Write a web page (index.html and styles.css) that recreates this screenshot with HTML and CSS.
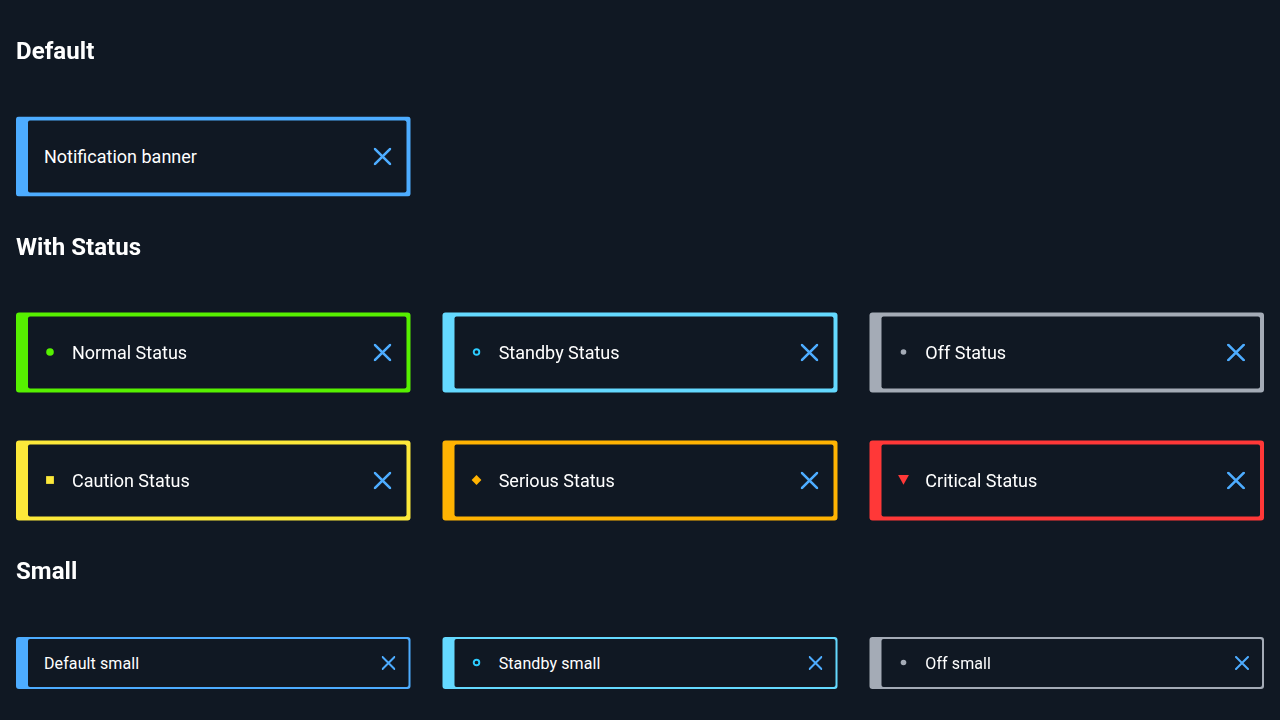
FILE: index.html
```html
<!DOCTYPE html>
<html lang="en">
<head>
<meta charset="utf-8">
<title>Notification banners</title>
<link rel="stylesheet" href="styles.css">
</head>
<body>
<svg width="0" height="0" class="sprite">
  <symbol id="close" viewBox="0 0 18 18"><path d="M1.3 1.3 16.7 16.7M16.7 1.3 1.3 16.7" fill="none" stroke="currentColor" stroke-width="2.6" stroke-linecap="round"/></symbol>
  <symbol id="normal" viewBox="0 0 12 12"><circle cx="6" cy="6" r="3.8" fill="#56f000"/></symbol>
  <symbol id="standby" viewBox="0 0 12 12"><circle cx="6" cy="6" r="2.8" fill="none" stroke="#2dccff" stroke-width="1.9"/></symbol>
  <symbol id="off" viewBox="0 0 12 12"><circle cx="6" cy="6" r="2.8" fill="#a4abb6"/></symbol>
  <symbol id="caution" viewBox="0 0 12 12"><path d="M2.1 2.1h7.8v7.8H2.1z" fill="#fce83a"/></symbol>
  <symbol id="serious" viewBox="0 0 12 12"><path d="M6 1.1 10.9 6 6 10.9 1.1 6z" fill="#ffb302"/></symbol>
  <symbol id="critical" viewBox="0 0 12 12"><path d="M.6 1h10.8L6 10.7z" fill="#ff3838"/></symbol>
</svg>
<main>
  <section>
    <h2>Default</h2>
    <div class="grid">
      <div class="banner default"><span class="label">Notification banner</span><svg class="close"><use href="#close"/></svg></div>
    </div>
  </section>
  <section>
    <h2>With Status</h2>
    <div class="grid">
      <div class="banner normal"><svg class="status"><use href="#normal"/></svg><span class="label">Normal Status</span><svg class="close"><use href="#close"/></svg></div>
      <div class="banner standby"><svg class="status"><use href="#standby"/></svg><span class="label">Standby Status</span><svg class="close"><use href="#close"/></svg></div>
      <div class="banner off"><svg class="status"><use href="#off"/></svg><span class="label">Off Status</span><svg class="close"><use href="#close"/></svg></div>
      <div class="banner caution"><svg class="status"><use href="#caution"/></svg><span class="label">Caution Status</span><svg class="close"><use href="#close"/></svg></div>
      <div class="banner serious"><svg class="status"><use href="#serious"/></svg><span class="label">Serious Status</span><svg class="close"><use href="#close"/></svg></div>
      <div class="banner critical"><svg class="status"><use href="#critical"/></svg><span class="label">Critical Status</span><svg class="close"><use href="#close"/></svg></div>
    </div>
  </section>
  <section>
    <h2>Small</h2>
    <div class="grid small">
      <div class="banner default"><span class="label">Default small</span><svg class="close"><use href="#close"/></svg></div>
      <div class="banner standby"><svg class="status"><use href="#standby"/></svg><span class="label">Standby small</span><svg class="close"><use href="#close"/></svg></div>
      <div class="banner off"><svg class="status"><use href="#off"/></svg><span class="label">Off small</span><svg class="close"><use href="#close"/></svg></div>
    </div>
  </section>
</main>
</body>
</html>
```
FILE: styles.css
```css
* { box-sizing: border-box; }
html, body { height: 100%; overflow: hidden; }
body {
  --base: #101823;
  margin: 0;
  background: var(--base);
  color: #fff;
  font-family: Roboto, "Liberation Sans", sans-serif;
}
.sprite { position: absolute; }
/* Laid out at double density so edges can sit on half pixels */
main {
  width: 1280px;
  height: 720px;
  margin: 0 -640px -360px 0;
  padding: 36.5px 16px 0;
  zoom: 2;
  transform: scale(.5);
  transform-origin: 0 0;
}
h2 {
  margin: 0 0 52px;
  font-size: 24px;
  line-height: 28px;
  font-weight: 700;
  letter-spacing: .06px;
}
.grid {
  display: grid;
  grid-template-columns: repeat(3, 1fr);
  gap: 48px 32px;
  margin-bottom: 36px;
}
.small {
  margin-bottom: 0;
  padding-top: .5px;
}
.banner {
  position: relative;
  isolation: isolate;
  display: flex;
  align-items: center;
  height: 80px;
  padding: 0 19px 0 28px;
  border-radius: 3px;
  background: var(--tone);
  font-size: 18px;
  line-height: 24px;
}
.banner::before {
  content: "";
  position: absolute;
  z-index: -1;
  inset: 4px 4px 4px 12px;
  border-radius: 2px;
  background: var(--base);
}
.small .banner {
  height: 52px;
  padding-right: 15px;
  font-size: 16px;
  letter-spacing: .1px;
}
.small .banner::before { inset: 2px 2px 2px 12px; }
.status {
  width: 12px;
  height: 12px;
  margin: 0 16px 1px 0;
}
.label { flex: 1; }
.close {
  width: 18px;
  height: 18px;
  color: #4dacff;
}
.small .close {
  width: 14px;
  height: 14px;
}
.default { --tone: #4dacff; }
.normal { --tone: #56f000; }
.standby { --tone: #64d9ff; }
.off { --tone: #a4abb6; }
.caution { --tone: #fce83a; }
.serious { --tone: #ffb302; }
.critical { --tone: #ff3838; }
```
